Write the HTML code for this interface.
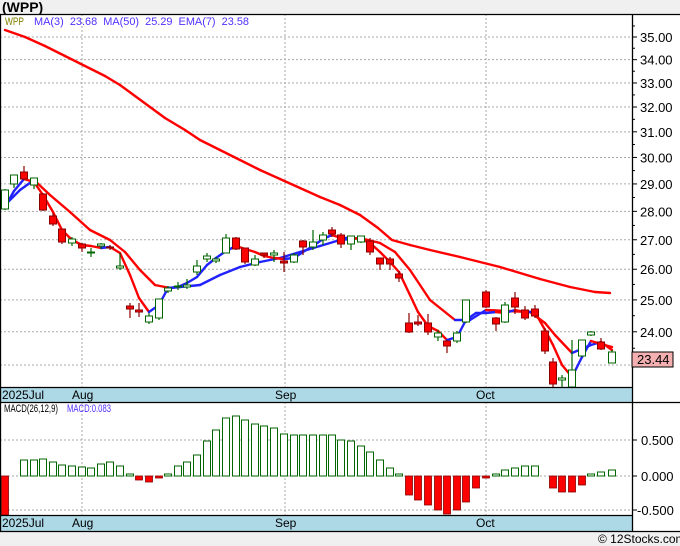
<!DOCTYPE html><html><head><style>
body{margin:0;width:680px;height:546px;background:#f0f0f0;overflow:hidden;font-family:"Liberation Sans",sans-serif}
svg{position:absolute;left:0;top:0}
</style></head><body>
<svg id="s" width="680" height="546" xmlns="http://www.w3.org/2000/svg" font-family="Liberation Sans, sans-serif">
<rect x="0" y="14" width="680" height="517" fill="#fff"/>
<text x="2" y="12" font-size="14" font-weight="bold" fill="#000">(WPP)</text>
<g id="g"></g>
<rect x="0" y="387" width="632" height="15" fill="#add8e6"/>
<rect x="0" y="515" width="632" height="16" fill="#add8e6"/>
<g stroke="#000" stroke-width="1.3" fill="none">
<line x1="0" y1="14.5" x2="680" y2="14.5"/><line x1="0.5" y1="14" x2="0.5" y2="531"/>
<line x1="0" y1="387.5" x2="632" y2="387.5"/><line x1="0" y1="402.5" x2="680" y2="402.5"/>
<line x1="0" y1="515.5" x2="632" y2="515.5"/><line x1="0" y1="531.5" x2="680" y2="531.5"/>
<line x1="632.5" y1="14" x2="632.5" y2="531"/>
</g>
<g font-size="12" fill="#000">
<text x="2" y="399">2025Jul</text><text x="72" y="399">Aug</text><text x="275" y="399">Sep</text><text x="476" y="399">Oct</text>
<text x="2" y="527">2025Jul</text><text x="72" y="527">Aug</text><text x="275" y="527">Sep</text><text x="476" y="527">Oct</text>
</g>
<text x="5" y="25" font-size="11" fill="#808000" textLength="19" lengthAdjust="spacingAndGlyphs">WPP</text>
<text x="34" y="25" font-size="11" fill="#5030ff" xml:space="preserve" textLength="215" lengthAdjust="spacingAndGlyphs">MA(3)  23.68  MA(50)  25.29  EMA(7)  23.58</text>
<text x="4" y="412" font-size="11" fill="#000" textLength="54" lengthAdjust="spacingAndGlyphs">MACD(26,12,9)</text>
<text x="67" y="412" font-size="11" fill="#5030ff" textLength="44" lengthAdjust="spacingAndGlyphs">MACD:0.083</text>
<rect x="632" y="352" width="41" height="15" fill="#f4b0b0" stroke="#000"/>
<text x="637" y="364" font-size="13" fill="#000">23.44</text>
<text x="598" y="543" font-size="12" fill="#000">© 12Stocks.com</text>
</svg>
<script>
var g=document.getElementById('g'),h='';
function Y(p){return 2814.8-781.3*Math.log(p)}
for(var p=23;p<=35;p++){var y=Y(p),y2=Y(p+0.5);h+='<line x1="0" y1="'+y+'" x2="632" y2="'+y+'" stroke="#aaa" stroke-dasharray="2,2"/>';
if(p>23)h+='<text x="640" y="'+(y+5)+'" font-size="13">'+p+'.00</text>';
h+='<line x1="632" y1="'+y+'" x2="637" y2="'+y+'" stroke="#000"/><line x1="632" y1="'+y2+'" x2="635" y2="'+y2+'" stroke="#000"/>';}
[[440,'0.500'],[476,'0.000'],[510,'-0.500']].forEach(function(a){h+='<line x1="0" y1="'+a[0]+'" x2="632" y2="'+a[0]+'" stroke="#aaa" stroke-dasharray="2,2"/><line x1="632" y1="'+a[0]+'" x2="637" y2="'+a[0]+'" stroke="#000"/><text x="'+(a[1][0]=='-'?637:641)+'" y="'+(a[0]+5)+'" font-size="13">'+a[1]+'</text>';});
[82,285,486].forEach(function(x){h+='<line x1="'+x+'" y1="14" x2="'+x+'" y2="531" stroke="#aaa" stroke-dasharray="2,2"/>'});
var m=[[5,515,1],[24,460],[34,460],[43,459],[53,462],[62,465],[72,466],[82,467],[91,468],[101,464],[110,462],[120,466],[130,474],[139,480,1],[149,482,1],[159,478,1],[168,474],[178,466],[187,462],[197,455],[207,441],[216,430],[226,418],[236,416],[245,420],[255,424],[264,426],[274,428],[284,434],[294,435],[303,435],[313,435],[323,435],[332,435],[341,440],[351,441],[361,446],[370,452],[380,460],[390,468],[399,474],[409,495,1],[418,500,1],[428,505,1],[438,510,1],[447,514,1],[457,510,1],[466,502,1],[476,488,1],[486,478,1],[496,474],[505,470],[515,468],[525,466],[535,466],[553,488,1],[562,492,1],[572,492,1],[582,485,1],[591,474],[601,472],[612,470]];
m.forEach(function(b){if(b[2])h+='<rect x="'+(b[0]-3.5)+'" y="476" width="7" height="'+(b[1]-476)+'" fill="#f00" stroke="#800" stroke-width="0.8"/>';else h+='<rect x="'+(b[0]-3.5)+'" y="'+b[1]+'" width="7" height="'+(476-b[1])+'" fill="#fff" stroke="#060" stroke-width="1"/>';});
function line(pts,col){for(var i=1;i<pts.length;i++){var c=col||(pts[i][1]>pts[i-1][1]?'#f00':'#22f');h+='<line x1="'+pts[i-1][0]+'" y1="'+pts[i-1][1]+'" x2="'+pts[i][0]+'" y2="'+pts[i][1]+'" stroke="'+c+'" stroke-width="2.4" stroke-linecap="round"/>';}}
line([[5,30],[25,37],[45,46],[65,56],[85,66],[105,76],[120,85],[135,96],[150,107],[165,118],[185,130],[200,140],[220,150],[240,160],[260,170],[280,179],[300,188],[320,197],[340,205],[360,215],[378,228],[392,240],[410,245],[430,250],[460,257],[500,267],[540,279],[570,287],[595,292],[610,293]],'#f00');
line([[5,205],[20,190],[34,180],[50,195],[70,212],[90,230],[110,240],[125,252],[140,270],[155,285],[170,288],[200,285],[220,275],[240,267],[260,262],[280,258],[300,252],[320,246],[340,240],[360,238],[380,243],[395,252],[410,270],[430,300],[455,320],[470,320],[486,310],[530,312],[545,323],[555,335],[572,353],[591,345],[601,342],[612,350]]);
line([[5,207],[14,191],[24,179],[34,182],[43,195],[53,212],[62,230],[72,240],[82,245],[91,246],[101,248],[110,247],[120,253],[130,275],[139,298],[149,312],[159,305],[168,288],[178,287],[187,283],[197,277],[207,265],[216,258],[226,251],[236,246],[245,249],[255,252],[264,256],[274,258],[284,259],[294,258],[303,252],[313,246],[323,239],[332,235],[341,238],[351,238],[361,239],[370,243],[380,252],[390,262],[399,272],[409,293],[418,312],[428,326],[438,331],[447,340],[457,337],[466,320],[476,313],[486,313],[496,312],[505,313],[515,310],[525,312],[535,312],[545,330],[553,345],[562,365],[572,377],[582,357],[591,341],[601,344],[612,347]]);
var c=[[5,190,209,189,210],[14,175,184,175,188],[24,172,179,166,180,1],[34,178,185,178,189],[43,194,210,193,211,1],[53,216,224,213,226,1],[62,229,242,229,244,1],[72,239,243,237,246],[82,244,248,243,252,1],[91,252,253,248,257],[101,244,246,243,249],[110,247,248,245,250,1],[120,266,268,253,270],[130,306,309,303,318,1],[139,310,312,303,317,1],[149,316,322,313,324],[159,299,318,299,320],[168,288,291,286,293],[178,286,287,282,290],[187,285,287,279,289],[197,266,272,260,275],[207,256,259,253,262],[216,259,261,257,263],[226,238,253,234,253],[236,238,249,237,250,1],[245,248,262,248,264,1],[255,259,265,255,266],[264,253,255,253,258,1],[274,253,255,250,262],[284,261,263,252,272,1],[294,255,262,253,263],[303,241,247,240,255,1],[313,242,247,230,250],[323,235,240,232,245],[332,230,234,227,237,1],[341,235,244,233,248,1],[351,236,244,236,250],[361,236,242,236,243],[370,241,252,238,255,1],[380,258,264,258,270,1],[390,259,264,257,270,1],[399,274,278,271,282,1],[409,323,332,313,333,1],[418,322,324,315,326,1],[428,323,332,314,335,1],[438,333,337,330,341],[447,341,346,340,353,1],[457,333,341,331,343],[466,300,322,300,323],[486,292,307,290,308,1],[496,318,324,317,331,1],[505,305,322,302,323],[515,298,307,292,314,1],[525,310,318,306,320,1],[535,309,316,305,318,1],[545,331,351,328,354,1],[553,362,384,358,388,1],[562,378,380,375,387],[572,370,387,340,387],[582,340,356,340,357],[591,332,335,331,336],[601,342,349,338,350,1],[612,352,363,350,363]];
c.forEach(function(k){var r=k[5],col=r?'#800':'#060';h+='<line x1="'+k[0]+'" y1="'+k[3]+'" x2="'+k[0]+'" y2="'+k[4]+'" stroke="'+col+'" stroke-width="1.2"/>';h+='<rect x="'+(k[0]-3.5)+'" y="'+k[1]+'" width="7" height="'+Math.max(1,k[2]-k[1])+'" fill="'+(r?'#f00':'#fff')+'" stroke="'+col+'" stroke-width="1"/>';});
g.innerHTML=h;
</script>
</body></html>
